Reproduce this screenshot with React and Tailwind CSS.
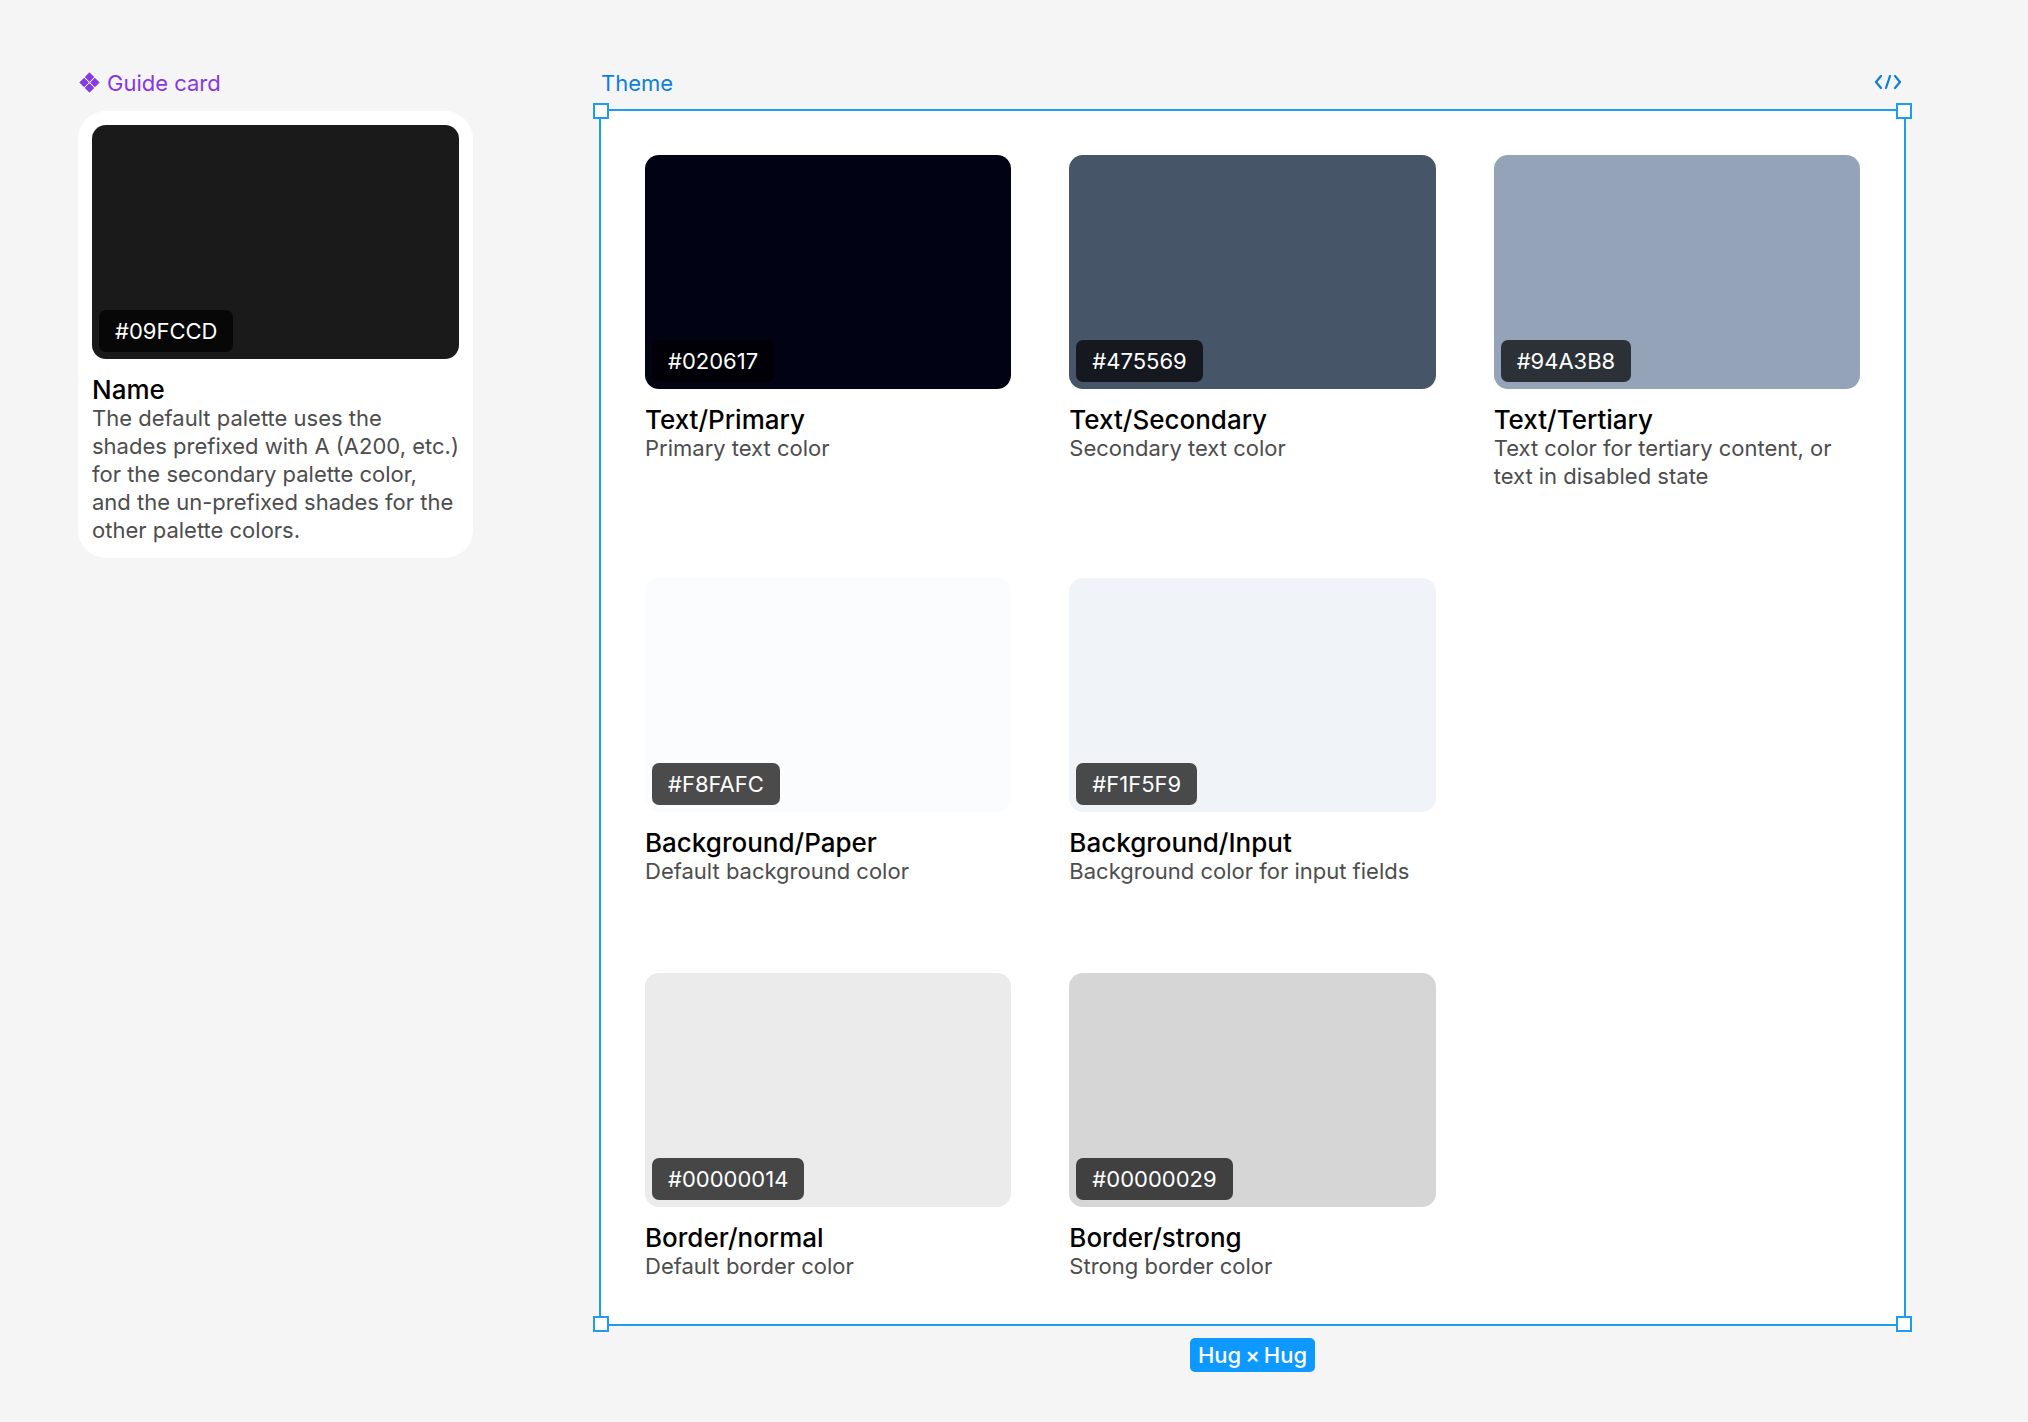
import React from 'react';

const themeColors = [
    { hex: '#020617', name: 'Text/Primary', description: 'Primary text color', swatch: 'bg-[#010314]' },
    { hex: '#475569', name: 'Text/Secondary', description: 'Secondary text color', swatch: 'bg-[#475569]' },
    { hex: '#94A3B8', name: 'Text/Tertiary', description: 'Text color for tertiary content, or text in disabled state', swatch: 'bg-[#94a3b8]' },
    { hex: '#F8FAFC', name: 'Background/Paper', description: 'Default background color', swatch: 'bg-[#fafcfd]' },
    { hex: '#F1F5F9', name: 'Background/Input', description: 'Background color for input fields', swatch: 'bg-[#f0f4f8]' },
    { hex: '#00000014', name: 'Border/normal', description: 'Default border color', swatch: 'bg-[#ebebeb]', newRow: true },
    { hex: '#00000029', name: 'Border/strong', description: 'Strong border color', swatch: 'bg-[#d6d6d6]' },
];

const handles = [
    '-top-2 -left-2',
    '-top-2 -right-2',
    '-bottom-2 -left-2',
    '-bottom-2 -right-2',
];

const ComponentIcon = () => (
    <svg width="22" height="22" viewBox="0 0 22 22" fill="currentColor" stroke="currentColor" strokeWidth="0.8" strokeLinejoin="round" aria-hidden="true">
        <path d="M11.5 0.8 15.8 5.1 11.5 9.4 7.2 5.1Z" />
        <path d="M11.5 11.6 15.8 15.9 11.5 20.2 7.2 15.9Z" />
        <path d="M6.1 6.2 10.4 10.5 6.1 14.8 1.8 10.5Z" />
        <path d="M16.9 6.2 21.2 10.5 16.9 14.8 12.6 10.5Z" />
    </svg>
);

const CodeIcon = () => (
    <svg width="28" height="16" viewBox="0 0 28 16" fill="none" stroke="currentColor" strokeWidth="2.2" strokeLinecap="round" strokeLinejoin="round">
        <path d="M7 1 2 7l5 6" />
        <path d="m16 1-4 12" />
        <path d="m21 1 5 6-5 6" />
    </svg>
);

const ColorCard = ({ hex, name, description, swatch }) => (
    <div>
        <div className={`flex h-[234px] items-end rounded-[14px] p-[7px] ${swatch}`}>
            <span className="rounded-[7px] bg-black/70 px-4 text-[22px] leading-[42px] text-white">{hex}</span>
        </div>
        <h3 className="mt-4 text-[26px] leading-[29px] font-medium text-black">{name}</h3>
        <p className="text-[22px] leading-[28px] text-[#4d4d4d]">{description}</p>
    </div>
);

const App = () => {
    return (
        <main className="flex min-h-screen items-start bg-[#f5f5f5] pt-[69px] pr-[122px] pb-[50px] pl-[78px] font-['Inter',sans-serif]">
            <section className="w-[395px] shrink-0">
                <h2 className="flex items-center gap-[7px] text-[22px] leading-[28px] text-[#8638e5]">
                    <ComponentIcon />
                    Guide card
                </h2>
                <div className="mt-[14px] rounded-[28px] bg-white p-[14px]">
                    <ColorCard
                        hex="#09FCCD"
                        name="Name"
                        description="The default palette uses the shades prefixed with A (A200, etc.) for the secondary palette color, and the un-prefixed shades for the other palette colors."
                        swatch="bg-[#1a1a1a]"
                    />
                </div>
            </section>

            <section className="ml-[126px] min-w-0 flex-1">
                <header className="flex items-center justify-between pr-1 pl-[2px] text-[#0d7fd8]">
                    <h2 className="text-[22px] leading-[28px]">Theme</h2>
                    <button type="button" aria-label="Dev mode"><CodeIcon /></button>
                </header>
                <div className="relative mt-3 border-2 border-[#1f9bf0] bg-white p-11">
                    <div className="grid grid-cols-3 gap-x-[58px] gap-y-22">
                        {themeColors.map((color) => (
                            <div key={color.hex} className={color.newRow ? 'col-start-1' : ''}>
                                <ColorCard {...color} />
                            </div>
                        ))}
                    </div>
                    {handles.map((position) => (
                        <span key={position} className={`absolute size-4 border-2 border-[#1f9bf0] bg-white ${position}`} />
                    ))}
                </div>
                <div className="mt-3 flex justify-center">
                    <div className="flex gap-1 rounded-[5px] bg-[#0d99ff] px-2 text-[22px] leading-[34px] font-medium text-white">
                        <span>Hug</span>
                        <span>×</span>
                        <span>Hug</span>
                    </div>
                </div>
            </section>
        </main>
    );
};

export default App;
